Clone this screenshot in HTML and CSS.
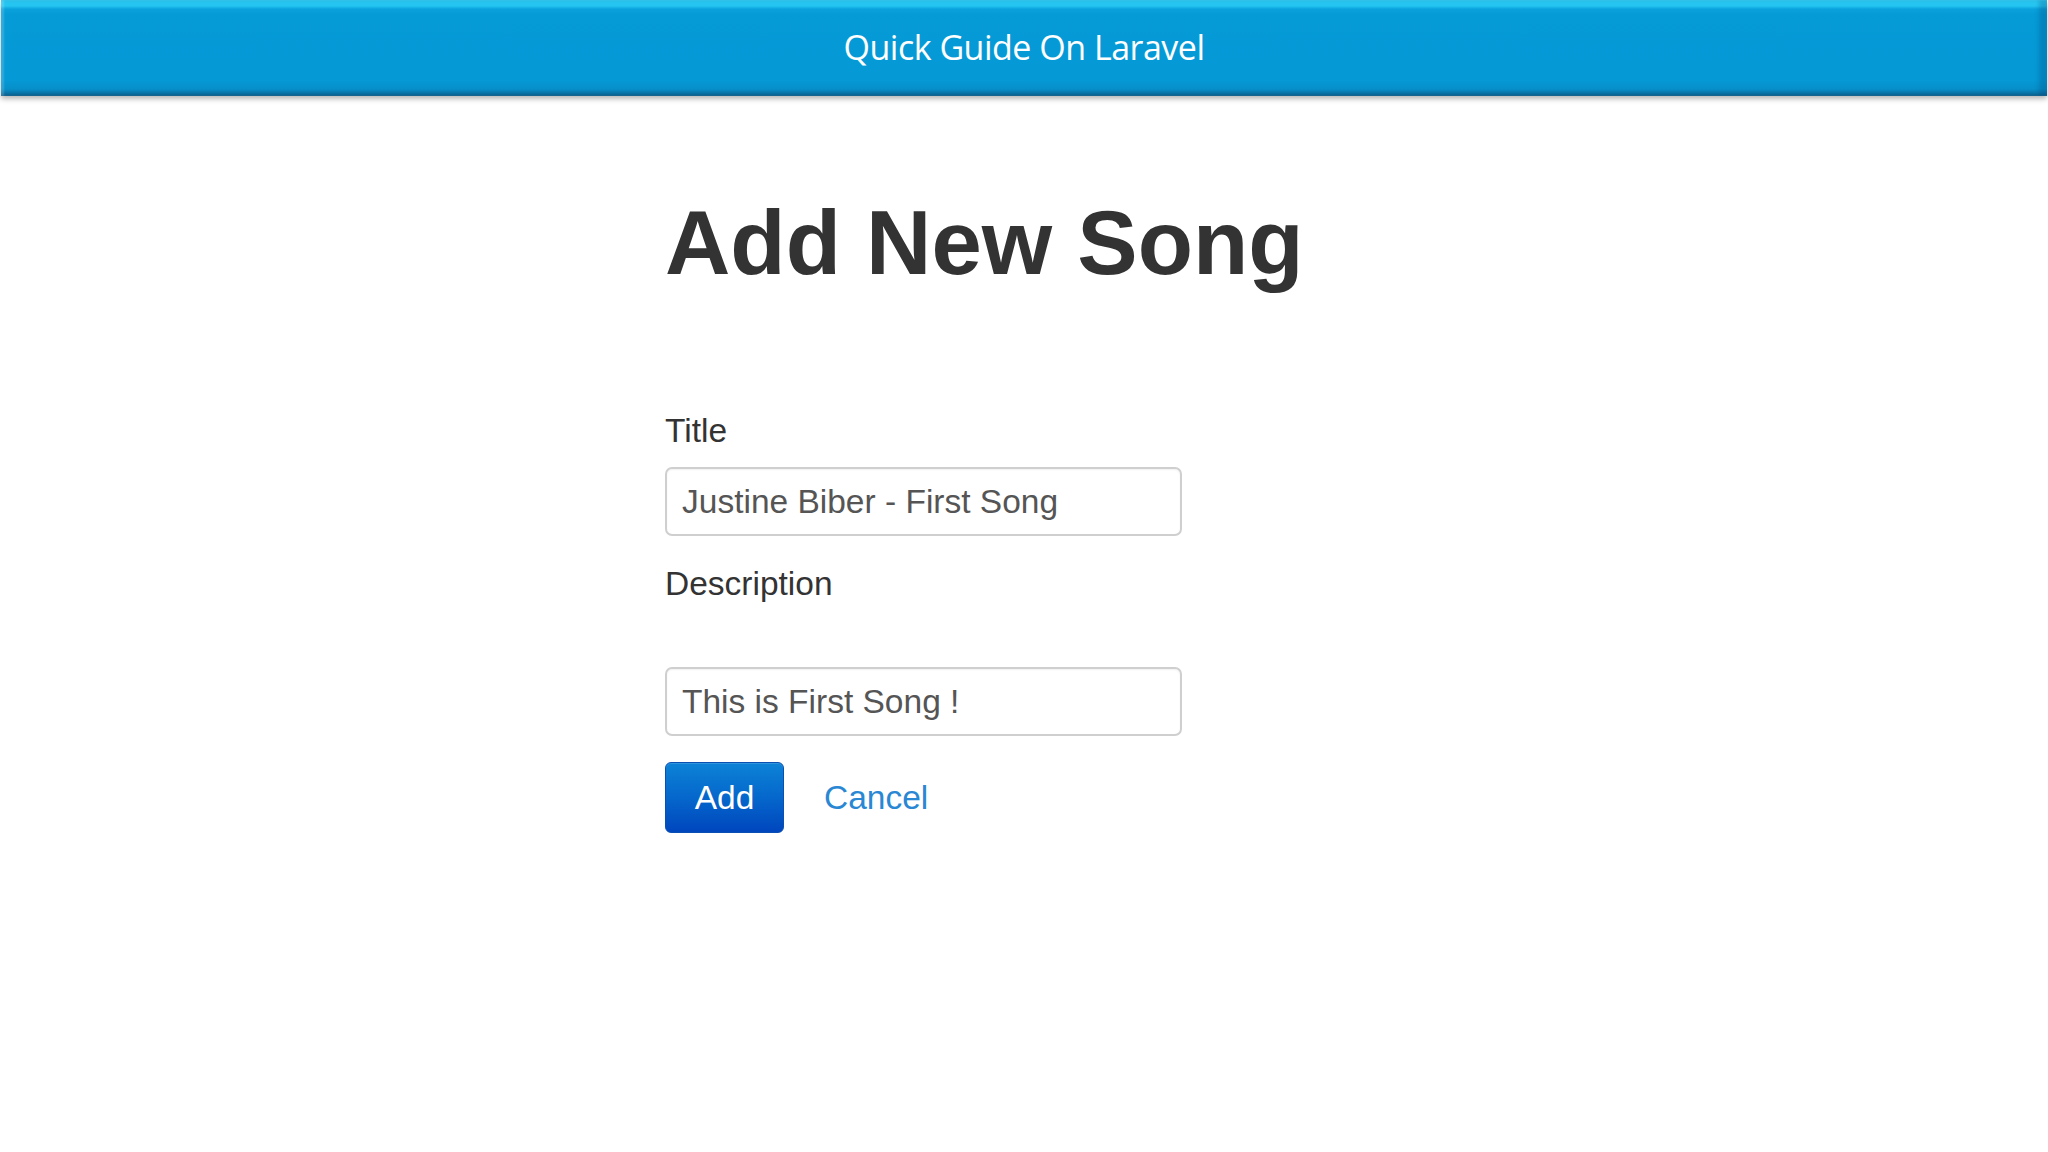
FILE: index.html
```html
<!DOCTYPE html>
<html lang="en">
<head>
<meta charset="utf-8">
<title>Add New Song</title>
<link rel="stylesheet" href="styles.css">
</head>
<body>
<header class="banner">
  <div class="banner-title">Quick Guide On Laravel</div>
</header>
<main class="container">
  <h1 class="page-title">Add New Song</h1>
  <form class="song-form">
    <div class="form-group">
      <label class="field-label" for="title">Title</label>
      <input class="field-input" id="title" type="text" value="Justine Biber - First Song">
    </div>
    <div class="form-group form-group-desc">
      <label class="field-label" for="desc">Description</label>
      <input class="field-input" id="desc" type="text" value="This is First Song !">
    </div>
    <div class="actions">
      <button class="btn-add" type="button">Add</button>
      <a class="link-cancel" href="#">Cancel</a>
    </div>
  </form>
</main>
</body>
</html>
```
FILE: styles.css
```css
html, body {
  margin: 0;
  padding: 0;
  background: #ffffff;
}
body {
  font-family: "Liberation Sans", Arial, sans-serif;
  color: #333333;
}
.banner {
  height: 96px;
  box-sizing: border-box;
  background: linear-gradient(to bottom,
    #2bcdf6 0px, #24c4f0 6px, #0aa2dc 9px, #059bd7 14px,
    #0599d6 80px, #078fc9 89px, #0a76aa 93px, #0a5f8a 96px);
  box-shadow:
    inset 3px 0 2px rgba(255,255,255,0.18),
    inset -8px 0 4px rgba(0,60,110,0.25),
    0 3px 5px rgba(0,0,0,0.28);
  display: flex;
  align-items: center;
  justify-content: center;
  margin: 0 1px;
}
.banner-title {
  font-family: "Open Sans", "Noto Sans", sans-serif;
  color: #ffffff;
  font-size: 34px;
  letter-spacing: -0.5px;
  line-height: 1;
  padding-bottom: 2px;
}
.container {
  width: 718px;
  margin: 0 auto;
}
.page-title {
  font-size: 90.5px;
  font-weight: bold;
  line-height: 99px;
  margin: 97px 0 0 0;
  color: #333333;
}
.song-form {
  margin-top: 117px;
}
.form-group {
  display: flex;
  flex-direction: column;
  align-items: flex-start;
}
.form-group-desc {
  margin-top: 26px;
}
.field-label {
  font-size: 33.5px;
  line-height: 44px;
  color: #333333;
  margin-bottom: 14px;
}
.form-group-desc .field-label {
  margin-bottom: 61px;
}
.field-input {
  width: 517px;
  height: 69px;
  box-sizing: border-box;
  border: 2px solid #cfcfcf;
  border-radius: 7px;
  padding: 0 15px;
  font-family: "Liberation Sans", Arial, sans-serif;
  font-size: 33.5px;
  color: #555555;
  background: #ffffff;
  box-shadow: inset 0 1px 2px rgba(0,0,0,0.06);
  outline: none;
}
.actions {
  display: flex;
  align-items: center;
  margin-top: 26px;
  gap: 40px;
}
.btn-add {
  width: 119px;
  height: 71px;
  border: 1px solid #0a4fb4;
  border-radius: 6px;
  background: linear-gradient(to bottom, #0c83d6 0%, #0567cc 50%, #0046bd 100%);
  color: #ffffff;
  font-family: "Liberation Sans", Arial, sans-serif;
  font-size: 33.5px;
  padding: 0;
  box-shadow: inset 0 1px 0 rgba(255,255,255,0.15);
}
.link-cancel {
  font-size: 33.5px;
  color: #2a87d3;
  text-decoration: none;
}
```
